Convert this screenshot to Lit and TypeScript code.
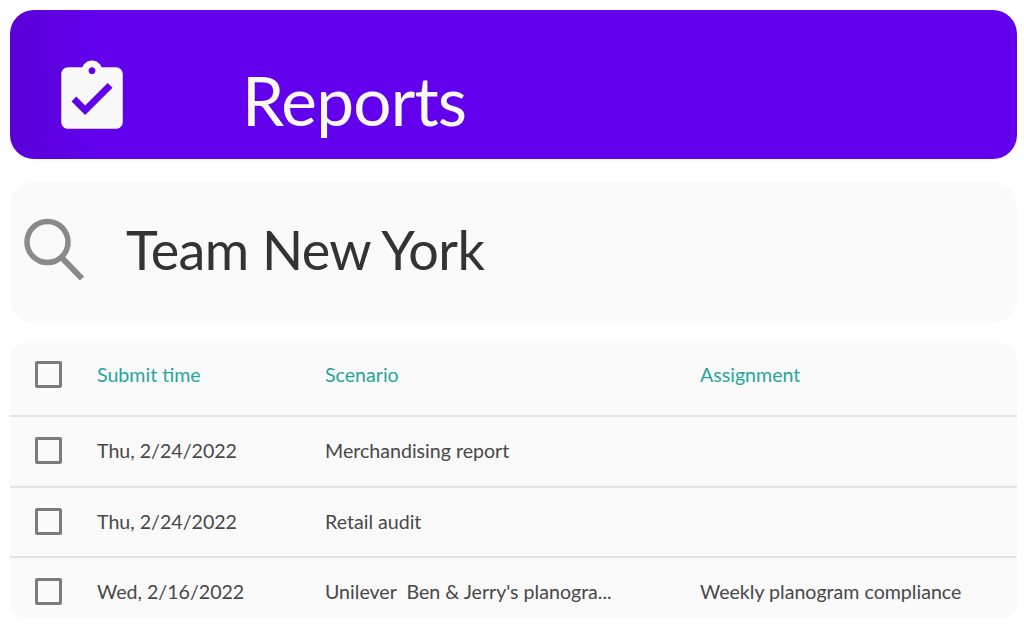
import { LitElement, html, css } from "lit";
import { customElement } from "lit/decorators.js";

const rows = [
  ["Thu, 2/24/2022", "Merchandising report", ""],
  ["Thu, 2/24/2022", "Retail audit", ""],
  ["Wed, 2/16/2022", "Unilever  Ben & Jerry's planogra...", "Weekly planogram compliance"],
];

@customElement("app-root")
export class AppRoot extends LitElement {
  static styles = css`
    :host { display: block; background: #fff; font-family: "Lato", sans-serif; width: 1024px; height: 633px; overflow: hidden; }
    .page { display: flex; flex-direction: column; padding: 10px 7px 0 10px; }
    .header {
      height: 149px; border-radius: 24px; display: flex; align-items: flex-start;
      background: linear-gradient(90deg, #5a00d6 0, #6200ee 90px);
      padding-left: 41px; box-sizing: border-box; color: #f8f8f8;
    }
    .header svg { width: 82px; height: 82px; margin-top: 47px; flex: none; }
    .title { margin-left: 109px; margin-top: 50px; font-size: 67.5px; line-height: 80px; letter-spacing: -0.8px; }
    .search {
      margin-top: 23px; height: 141px; border-radius: 24px; background: #fafafa;
      display: flex; align-items: center; padding-left: 14px; box-sizing: border-box;
    }
    .search svg { width: 72px; height: 72px; flex: none; margin-top: 1px; }
    .query { margin-left: 30px; font-size: 54px; line-height: 70px; color: #333; letter-spacing: -0.6px; margin-top: -5px; }
    .table { margin-top: 20px; background: #fafafa; border-radius: 14px; display: flex; flex-direction: column; height: 275px; }
    .row {
      display: grid; grid-template-columns: 87px 228px 375px 1fr; align-items: center;
      font-size: 19.6px; color: #484848; border-top: 2px solid #e3e3e3; height: 69px; padding-bottom: 2px; box-sizing: content-box;
      white-space: pre;
    }
    .row.head { border-top: none; height: 72px; color: #26a69a; padding-bottom: 10px; box-sizing: border-box; }
    .row:nth-child(2) { height: 67px; }
    .row:nth-child(3) { height: 66px; }
    .row:last-child { height: 60px; padding: 9px 0 0; box-sizing: border-box; }
    .check {
      width: 27px; height: 27px; box-sizing: border-box; border: 3px solid #7b7b7b; border-radius: 2px;
      margin-left: 25px;
    }
  `;

  render() {
    return html`
      <div class="page">
        <div class="header">
          <svg viewBox="0 0 24 24" fill="currentColor"><path d="M19 3h-4.18C14.4 1.84 13.3 1 12 1c-1.3 0-2.4.84-2.82 2H5c-1.1 0-2 .9-2 2v14c0 1.1.9 2 2 2h14c1.1 0 2-.9 2-2V5c0-1.1-.9-2-2-2zm-7 0c.55 0 1 .45 1 1s-.45 1-1 1-1-.45-1-1 .45-1 1-1zm-2 14l-4-4 1.41-1.41L10 14.17l6.59-6.59L18 9l-8 8z"/></svg>
          <div class="title">Reports</div>
        </div>
        <div class="search">
          <svg viewBox="0 0 72 72" fill="none" stroke="#8a8a8a"><circle cx="23.5" cy="25" r="20.5" stroke-width="5.5"/><path d="M38.5 41.5 58 61.5" stroke-width="6"/></svg>
          <div class="query">Team New York</div>
        </div>
        <div class="table">
          <div class="row head"><div class="check"></div><div>Submit time</div><div>Scenario</div><div>Assignment</div></div>
          ${rows.map((r) => html`<div class="row"><div class="check"></div><div>${r[0]}</div><div>${r[1]}</div><div>${r[2]}</div></div>`)}
        </div>
      </div>
    `;
  }
}
